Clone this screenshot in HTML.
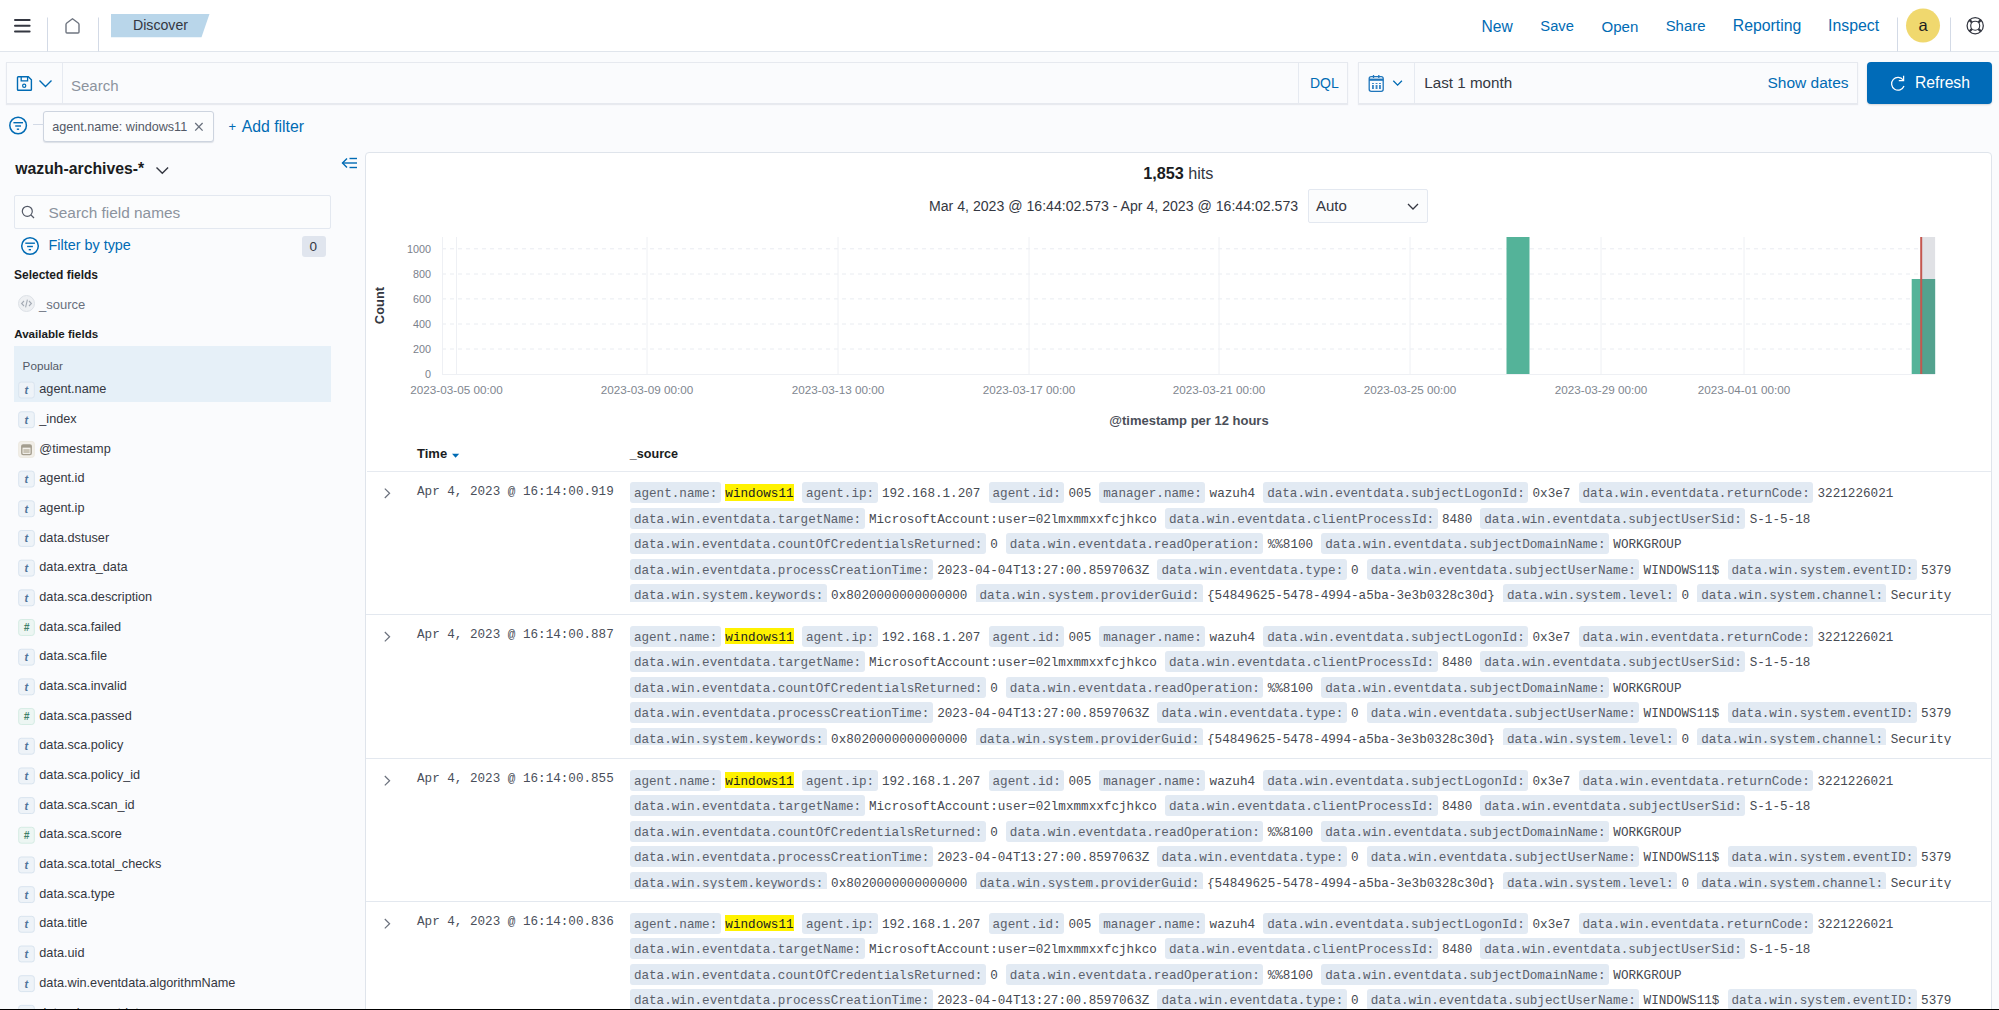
<!DOCTYPE html>
<html><head><meta charset="utf-8">
<style>
*{box-sizing:border-box;margin:0;padding:0}
html,body{width:1999px;height:1010px;overflow:hidden;background:#FAFBFD;font-family:"Liberation Sans",sans-serif;color:#343741}
.a{position:absolute;white-space:nowrap}
.t{position:absolute;white-space:nowrap;line-height:1}
svg{position:absolute;overflow:visible}
.ln{position:absolute;left:0;white-space:nowrap;height:21px;line-height:24.1px;font-family:"Liberation Mono",monospace;font-size:12.638px;color:#464A52}
.k{display:inline-block;vertical-align:top;background:#E2EAF3;color:#5A606B;padding:0 3.4px 0 3.9px;margin-right:4.4px;border-radius:3px;height:21px}
.v{display:inline-block;vertical-align:top;height:21px;margin-right:8.2px}
.hl{display:inline-block;vertical-align:top;margin-top:2.1px;height:16.5px;line-height:20.7px;background:#FFF200;color:#1a1c21;padding:0 0.35px}
</style></head><body>
<div class="a" style="left:0;top:0;width:1999px;height:52px;background:#fff;border-bottom:1px solid #E0E5EC"></div>
<svg style="left:0;top:0" width="1999" height="52">
  <g fill="#343741">
    <rect x="14" y="19.1" width="16.6" height="2" rx="1"/>
    <rect x="14" y="24.7" width="16.6" height="2" rx="1"/>
    <rect x="14" y="30.4" width="16.6" height="2" rx="1"/>
  </g>
  <rect x="47" y="17.5" width="1" height="34" fill="#D3DAE6"/>
  <rect x="98" y="17.5" width="1" height="34" fill="#D3DAE6"/>
  <path d="M66 24.6 Q66 23.6 66.8 23 L72.5 18.7 L78.2 23 Q79 23.6 79 24.6 L79 32 Q79 33 78 33 L67 33 Q66 33 66 32 Z" fill="none" stroke="#6F7580" stroke-width="1.4" stroke-linejoin="round"/>
  <polygon points="111,14 209.5,14 201.5,37.3 111,37.3" fill="#B9D6EA"/>
  <rect x="1897" y="17.5" width="1" height="34" fill="#D3DAE6"/>
  <rect x="1950" y="17.5" width="1" height="34" fill="#D3DAE6"/>
  <circle cx="1923" cy="25.5" r="17" fill="#F0D86E"/>
  <g transform="translate(1975.2,25.7)" fill="none" stroke="#343741">
    <circle r="8.1" stroke-width="1.25"/>
    <circle r="4.5" stroke-width="1.15"/>
    <g stroke-width="2.3"><line x1="3.2" y1="-3.2" x2="5.8" y2="-5.8"/><line x1="-3.2" y1="-3.2" x2="-5.8" y2="-5.8"/><line x1="3.2" y1="3.2" x2="5.8" y2="5.8"/><line x1="-3.2" y1="3.2" x2="-5.8" y2="5.8"/></g>
  </g>
</svg>
<div class="t" style="left:133.00px;top:18.02px;font-size:14.15px;color:#343741;">Discover</div>
<div class="t" style="left:1481.50px;top:18.59px;font-size:15.6px;color:#006BB4;">New</div>
<div class="t" style="left:1540.30px;top:19.31px;font-size:14.75px;color:#006BB4;">Save</div>
<div class="t" style="left:1601.50px;top:19.06px;font-size:15.05px;color:#006BB4;">Open</div>
<div class="t" style="left:1665.70px;top:19.19px;font-size:14.9px;color:#006BB4;">Share</div>
<div class="t" style="left:1732.80px;top:18.43px;font-size:15.8px;color:#006BB4;">Reporting</div>
<div class="t" style="left:1828.00px;top:18.38px;font-size:15.85px;color:#006BB4;">Inspect</div>
<div class="t" style="left:1903px;width:40px;text-align:center;top:17.43px;font-size:16.5px;color:#1a1c21">a</div>
<div class="a" style="left:6px;top:62px;width:1342px;height:41.5px;background:#FBFCFD;background:#FAFBFD;border:1px solid #E6E9EF;box-shadow:0 1px 1px rgba(152,162,179,.18)"></div>
<div class="a" style="left:62px;top:63px;width:1px;height:40px;background:#E6EAF1;"></div>
<div class="a" style="left:1298px;top:63px;width:1px;height:40px;background:#E6EAF1;"></div>
<div class="t" style="left:71.00px;top:77.90px;font-size:15px;color:#8C939E;">Search</div>
<div class="t" style="left:1310.00px;top:76.35px;font-size:14px;color:#006BB4;">DQL</div>
<div class="a" style="left:1358px;top:62px;width:500px;height:41.5px;background:#FBFCFD;background:#FAFBFD;border:1px solid #E6E9EF;box-shadow:0 1px 1px rgba(152,162,179,.18)"></div>
<div class="a" style="left:1414px;top:63px;width:1px;height:40px;background:#E6EAF1;"></div>
<div class="t" style="left:1424.30px;top:75.13px;font-size:15.2px;color:#343741;">Last 1 month</div>
<div class="t" style="left:1767.50px;top:74.88px;font-size:15.5px;color:#006BB4;">Show dates</div>
<div class="a" style="left:1867px;top:61.5px;width:125px;height:42px;background:#006BB8;border-radius:4px;box-shadow:0 1px 2px rgba(0,0,0,.15)"></div>
<div class="t" style="left:1915.00px;top:74.71px;font-size:15.7px;color:#fff;">Refresh</div>
<div class="a" style="left:43px;top:111.3px;width:170.8px;height:30.8px;background:#FBFCFD;border:1px solid #CDD4DF;border-radius:3px;box-shadow:0 1px 1px rgba(152,162,179,.3)"></div>
<div class="t" style="left:52.30px;top:120.83px;font-size:12.6px;color:#535966;">agent.name: windows11</div>
<div class="t" style="left:228.4px;top:118.83px;font-size:15.8px;color:#006BB4"><span style="font-size:13px;position:relative;top:-0.5px;margin-right:2.2px">+</span> Add filter</div>
<svg style="left:0;top:0" width="1999" height="150">
  <path d="M17.5 77.5 Q17.5 76.7 18.3 76.7 L28.3 76.7 L31.4 79.8 L31.4 89.5 Q31.4 90.3 30.6 90.3 L18.3 90.3 Q17.5 90.3 17.5 89.5 Z" fill="none" stroke="#006BB4" stroke-width="1.4"/>
  <path d="M21.2 76.7 L21.2 80.8 L27.6 80.8 L27.6 76.7" fill="none" stroke="#006BB4" stroke-width="1.3"/>
  <circle cx="24.2" cy="85.7" r="1.6" fill="none" stroke="#006BB4" stroke-width="1.2"/>
  <path d="M39.5 80.5 L45.5 86.5 L51.5 80.5" fill="none" stroke="#006BB4" stroke-width="1.4"/>
  <g fill="none" stroke="#1F76BC" stroke-width="1.3">
    <rect x="1369.2" y="76.6" width="14" height="14.7" rx="2"/>
    <line x1="1373.5" y1="75" x2="1373.5" y2="78"/>
    <line x1="1378.8" y1="75" x2="1378.8" y2="78"/>
  </g>
  <rect x="1369" y="78.6" width="14.4" height="2.2" fill="#1F76BC"/>
  <g fill="#3C88C6"><rect x="1372" y="83" width="1.9" height="1"/><rect x="1375.6" y="83" width="1.9" height="1"/><rect x="1379" y="83" width="1.9" height="1"/><rect x="1372" y="85" width="1.9" height="4"/><rect x="1375.6" y="85" width="1.9" height="4"/><rect x="1379" y="85" width="1.9" height="4"/></g>
  <path d="M1393.3 80.8 L1397.6 85.1 L1401.9 80.8" fill="none" stroke="#006BB4" stroke-width="1.3"/>
  <path d="M1903.2 80 A6.4 6.4 0 1 0 1904 86" fill="none" stroke="#fff" stroke-width="1.25"/>
  <path d="M1903.6 75.8 L1903.6 80.6 L1898.8 80.6" fill="none" stroke="#fff" stroke-width="1.25"/>
  <circle cx="18.1" cy="125.5" r="8.3" fill="none" stroke="#006BB4" stroke-width="1.5"/>
  <g stroke="#006BB4" stroke-width="1.4"><line x1="13.4" y1="122.7" x2="23" y2="122.7"/><line x1="15.2" y1="126" x2="21" y2="126"/><line x1="16.8" y1="129.2" x2="19.1" y2="129.2"/></g>
  <rect x="33" y="124" width="10.5" height="1" fill="#D3DAE6"/>
  <path d="M195.2 123 L202.6 130.6 M202.6 123 L195.2 130.6" stroke="#69707D" stroke-width="1.3"/>
</svg>
<div class="t" style="left:15.20px;top:161.13px;font-size:15.8px;color:#1a1c21;font-weight:bold;">wazuh-archives-*</div>
<div class="a" style="left:14.3px;top:195.4px;width:316.5px;height:33.2px;background:#FBFCFD;border:1px solid #E3E8F0;border-radius:2px"></div>
<svg style="left:0;top:0" width="366" height="1010">
  <path d="M156.5 167.5 L162.3 173.3 L168.1 167.5" fill="none" stroke="#343741" stroke-width="1.4"/>
  <g fill="none" stroke="#006BB4" stroke-width="1.4"><path d="M347 158.5 L342.5 163 L347 167.5"/><line x1="342.5" y1="163" x2="357" y2="163"/><line x1="349.5" y1="158.5" x2="357" y2="158.5"/><line x1="349.5" y1="167.5" x2="357" y2="167.5"/></g>
  <circle cx="27.3" cy="211.3" r="5" fill="none" stroke="#535966" stroke-width="1.2"/>
  <line x1="30.9" y1="214.9" x2="34" y2="218" stroke="#535966" stroke-width="1.3"/>
  <circle cx="30" cy="246" r="8.3" fill="none" stroke="#006BB4" stroke-width="1.5"/>
  <g stroke="#006BB4" stroke-width="1.4"><line x1="25.3" y1="243.2" x2="34.9" y2="243.2"/><line x1="27.1" y1="246.5" x2="32.9" y2="246.5"/><line x1="28.7" y1="249.7" x2="31" y2="249.7"/></g>
  <circle cx="26.5" cy="303.5" r="8" fill="#EEF0F3" stroke="#DDE1E7" stroke-width="1"/>
  <path d="M24 301 L21.6 303.5 L24 306 M29 301 L31.4 303.5 L29 306 M27.4 299.6 L25.6 307.4" fill="none" stroke="#A5ABB5" stroke-width="1.1"/>
</svg>
<div class="t" style="left:48.50px;top:205.16px;font-size:15.4px;color:#8C939E;">Search field names</div>
<div class="t" style="left:48.50px;top:237.81px;font-size:14.4px;color:#006BB4;">Filter by type</div>
<div class="a" style="left:301.6px;top:236px;width:24.4px;height:21.2px;background:#E0E5EE;border-radius:3px"></div>
<div class="t" style="left:309.50px;top:240.07px;font-size:13.5px;color:#343741;">0</div>
<div class="t" style="left:14.00px;top:268.84px;font-size:12px;color:#1a1c21;font-weight:bold;">Selected fields</div>
<div class="t" style="left:39.10px;top:298.30px;font-size:13px;color:#69707D;">_source</div>
<div class="t" style="left:14.20px;top:328.08px;font-size:11.6px;color:#1a1c21;font-weight:bold;">Available fields</div>
<div class="a" style="left:14.1px;top:345.5px;width:316.7px;height:56.5px;background:#E6F0F8;"></div>
<div class="t" style="left:22.60px;top:359.80px;font-size:11.7px;color:#535966;">Popular</div>
<div class="t" style="left:39.30px;top:383.25px;font-size:12.7px;color:#343741;">agent.name</div>
<div class="t" style="left:39.30px;top:412.93px;font-size:12.7px;color:#343741;">_index</div>
<div class="t" style="left:39.30px;top:442.61px;font-size:12.7px;color:#343741;">@timestamp</div>
<div class="t" style="left:39.30px;top:472.29px;font-size:12.7px;color:#343741;">agent.id</div>
<div class="t" style="left:39.30px;top:501.97px;font-size:12.7px;color:#343741;">agent.ip</div>
<div class="t" style="left:39.30px;top:531.65px;font-size:12.7px;color:#343741;">data.dstuser</div>
<div class="t" style="left:39.30px;top:561.33px;font-size:12.7px;color:#343741;">data.extra_data</div>
<div class="t" style="left:39.30px;top:591.01px;font-size:12.7px;color:#343741;">data.sca.description</div>
<div class="t" style="left:39.30px;top:620.69px;font-size:12.7px;color:#343741;">data.sca.failed</div>
<div class="t" style="left:39.30px;top:650.37px;font-size:12.7px;color:#343741;">data.sca.file</div>
<div class="t" style="left:39.30px;top:680.05px;font-size:12.7px;color:#343741;">data.sca.invalid</div>
<div class="t" style="left:39.30px;top:709.73px;font-size:12.7px;color:#343741;">data.sca.passed</div>
<div class="t" style="left:39.30px;top:739.41px;font-size:12.7px;color:#343741;">data.sca.policy</div>
<div class="t" style="left:39.30px;top:769.09px;font-size:12.7px;color:#343741;">data.sca.policy_id</div>
<div class="t" style="left:39.30px;top:798.77px;font-size:12.7px;color:#343741;">data.sca.scan_id</div>
<div class="t" style="left:39.30px;top:828.45px;font-size:12.7px;color:#343741;">data.sca.score</div>
<div class="t" style="left:39.30px;top:858.13px;font-size:12.7px;color:#343741;">data.sca.total_checks</div>
<div class="t" style="left:39.30px;top:887.81px;font-size:12.7px;color:#343741;">data.sca.type</div>
<div class="t" style="left:39.30px;top:917.49px;font-size:12.7px;color:#343741;">data.title</div>
<div class="t" style="left:39.30px;top:947.17px;font-size:12.7px;color:#343741;">data.uid</div>
<div class="t" style="left:39.30px;top:976.85px;font-size:12.7px;color:#343741;">data.win.eventdata.algorithmName</div>
<div class="t" style="left:39.30px;top:1006.53px;font-size:12.7px;color:#343741;">data.win.eventdata.a</div>
<svg style="left:0;top:0" width="366" height="1010">
<rect x="18.7" y="382.10" width="15.6" height="15.9" rx="2.5" fill="#EEF3F8" stroke="#D9E4EF" stroke-width="1"/>
<text x="26.3" y="394.00" font-family="Liberation Sans" font-style="italic" font-weight="bold" font-size="11" fill="#50739A" text-anchor="middle">t</text>
<rect x="18.7" y="411.78" width="15.6" height="15.9" rx="2.5" fill="#EEF3F8" stroke="#D9E4EF" stroke-width="1"/>
<text x="26.3" y="423.68" font-family="Liberation Sans" font-style="italic" font-weight="bold" font-size="11" fill="#50739A" text-anchor="middle">t</text>
<rect x="18.7" y="441.46" width="15.6" height="15.9" rx="2.5" fill="#F2EFE9" stroke="#ECE8DF" stroke-width="1"/>
<rect x="21.8" y="445.06" width="9.4" height="9.6" rx="1.3" fill="none" stroke="#A39D8E" stroke-width="1.4"/>
<rect x="21.8" y="445.06" width="9.4" height="2.6" fill="#A39D8E"/>
<rect x="23.4" y="449.06" width="6.2" height="4" fill="#C9C3B5"/>
<rect x="18.7" y="471.14" width="15.6" height="15.9" rx="2.5" fill="#EEF3F8" stroke="#D9E4EF" stroke-width="1"/>
<text x="26.3" y="483.04" font-family="Liberation Sans" font-style="italic" font-weight="bold" font-size="11" fill="#50739A" text-anchor="middle">t</text>
<rect x="18.7" y="500.82" width="15.6" height="15.9" rx="2.5" fill="#EEF3F8" stroke="#D9E4EF" stroke-width="1"/>
<text x="26.3" y="512.72" font-family="Liberation Sans" font-style="italic" font-weight="bold" font-size="11" fill="#50739A" text-anchor="middle">t</text>
<rect x="18.7" y="530.50" width="15.6" height="15.9" rx="2.5" fill="#EEF3F8" stroke="#D9E4EF" stroke-width="1"/>
<text x="26.3" y="542.40" font-family="Liberation Sans" font-style="italic" font-weight="bold" font-size="11" fill="#50739A" text-anchor="middle">t</text>
<rect x="18.7" y="560.18" width="15.6" height="15.9" rx="2.5" fill="#EEF3F8" stroke="#D9E4EF" stroke-width="1"/>
<text x="26.3" y="572.08" font-family="Liberation Sans" font-style="italic" font-weight="bold" font-size="11" fill="#50739A" text-anchor="middle">t</text>
<rect x="18.7" y="589.86" width="15.6" height="15.9" rx="2.5" fill="#EEF3F8" stroke="#D9E4EF" stroke-width="1"/>
<text x="26.3" y="601.76" font-family="Liberation Sans" font-style="italic" font-weight="bold" font-size="11" fill="#50739A" text-anchor="middle">t</text>
<rect x="18.7" y="619.54" width="15.6" height="15.9" rx="2.5" fill="#EDF6F3" stroke="#D5ECE4" stroke-width="1"/>
<text x="26.5" y="631.44" font-family="Liberation Sans" font-style="italic" font-weight="bold" font-size="10" fill="#3F7F69" text-anchor="middle">#</text>
<rect x="18.7" y="649.22" width="15.6" height="15.9" rx="2.5" fill="#EEF3F8" stroke="#D9E4EF" stroke-width="1"/>
<text x="26.3" y="661.12" font-family="Liberation Sans" font-style="italic" font-weight="bold" font-size="11" fill="#50739A" text-anchor="middle">t</text>
<rect x="18.7" y="678.90" width="15.6" height="15.9" rx="2.5" fill="#EEF3F8" stroke="#D9E4EF" stroke-width="1"/>
<text x="26.3" y="690.80" font-family="Liberation Sans" font-style="italic" font-weight="bold" font-size="11" fill="#50739A" text-anchor="middle">t</text>
<rect x="18.7" y="708.58" width="15.6" height="15.9" rx="2.5" fill="#EDF6F3" stroke="#D5ECE4" stroke-width="1"/>
<text x="26.5" y="720.48" font-family="Liberation Sans" font-style="italic" font-weight="bold" font-size="10" fill="#3F7F69" text-anchor="middle">#</text>
<rect x="18.7" y="738.26" width="15.6" height="15.9" rx="2.5" fill="#EEF3F8" stroke="#D9E4EF" stroke-width="1"/>
<text x="26.3" y="750.16" font-family="Liberation Sans" font-style="italic" font-weight="bold" font-size="11" fill="#50739A" text-anchor="middle">t</text>
<rect x="18.7" y="767.94" width="15.6" height="15.9" rx="2.5" fill="#EEF3F8" stroke="#D9E4EF" stroke-width="1"/>
<text x="26.3" y="779.84" font-family="Liberation Sans" font-style="italic" font-weight="bold" font-size="11" fill="#50739A" text-anchor="middle">t</text>
<rect x="18.7" y="797.62" width="15.6" height="15.9" rx="2.5" fill="#EEF3F8" stroke="#D9E4EF" stroke-width="1"/>
<text x="26.3" y="809.52" font-family="Liberation Sans" font-style="italic" font-weight="bold" font-size="11" fill="#50739A" text-anchor="middle">t</text>
<rect x="18.7" y="827.30" width="15.6" height="15.9" rx="2.5" fill="#EDF6F3" stroke="#D5ECE4" stroke-width="1"/>
<text x="26.5" y="839.20" font-family="Liberation Sans" font-style="italic" font-weight="bold" font-size="10" fill="#3F7F69" text-anchor="middle">#</text>
<rect x="18.7" y="856.98" width="15.6" height="15.9" rx="2.5" fill="#EEF3F8" stroke="#D9E4EF" stroke-width="1"/>
<text x="26.3" y="868.88" font-family="Liberation Sans" font-style="italic" font-weight="bold" font-size="11" fill="#50739A" text-anchor="middle">t</text>
<rect x="18.7" y="886.66" width="15.6" height="15.9" rx="2.5" fill="#EEF3F8" stroke="#D9E4EF" stroke-width="1"/>
<text x="26.3" y="898.56" font-family="Liberation Sans" font-style="italic" font-weight="bold" font-size="11" fill="#50739A" text-anchor="middle">t</text>
<rect x="18.7" y="916.34" width="15.6" height="15.9" rx="2.5" fill="#EEF3F8" stroke="#D9E4EF" stroke-width="1"/>
<text x="26.3" y="928.24" font-family="Liberation Sans" font-style="italic" font-weight="bold" font-size="11" fill="#50739A" text-anchor="middle">t</text>
<rect x="18.7" y="946.02" width="15.6" height="15.9" rx="2.5" fill="#EEF3F8" stroke="#D9E4EF" stroke-width="1"/>
<text x="26.3" y="957.92" font-family="Liberation Sans" font-style="italic" font-weight="bold" font-size="11" fill="#50739A" text-anchor="middle">t</text>
<rect x="18.7" y="975.70" width="15.6" height="15.9" rx="2.5" fill="#EEF3F8" stroke="#D9E4EF" stroke-width="1"/>
<text x="26.3" y="987.60" font-family="Liberation Sans" font-style="italic" font-weight="bold" font-size="11" fill="#50739A" text-anchor="middle">t</text>
<rect x="18.7" y="1005.38" width="15.6" height="15.9" rx="2.5" fill="#EEF3F8" stroke="#D9E4EF" stroke-width="1"/>
<text x="26.3" y="1017.28" font-family="Liberation Sans" font-style="italic" font-weight="bold" font-size="11" fill="#50739A" text-anchor="middle">t</text>
</svg>
<div class="a" style="left:365px;top:152px;width:1627px;height:900px;background:#fff;border:1px solid #DFE4EB;border-radius:4px"></div>
<div class="t" style="left:1143.2px;top:165.29px;font-size:16.2px;color:#343741"><b style="color:#1a1c21">1,853</b> hits</div>
<div class="t" style="left:929.00px;top:199.05px;font-size:14.12px;color:#343741;">Mar 4, 2023 @ 16:44:02.573 - Apr 4, 2023 @ 16:44:02.573</div>
<div class="a" style="left:1307.6px;top:189.3px;width:120.2px;height:33.9px;background:#FBFCFD;border:1px solid #E3E8F0;border-radius:2px"></div>
<div class="t" style="left:1316.00px;top:198.10px;font-size:15px;color:#343741;">Auto</div>
<svg style="left:0;top:0" width="1999" height="1010">
<line x1="442" y1="248.8" x2="1935" y2="248.8" stroke="#E9ECF1" stroke-width="1" stroke-dasharray="4 4"/>
<line x1="442" y1="274" x2="1935" y2="274" stroke="#E9ECF1" stroke-width="1" stroke-dasharray="4 4"/>
<line x1="442" y1="298.9" x2="1935" y2="298.9" stroke="#E9ECF1" stroke-width="1" stroke-dasharray="4 4"/>
<line x1="442" y1="324" x2="1935" y2="324" stroke="#E9ECF1" stroke-width="1" stroke-dasharray="4 4"/>
<line x1="442" y1="349" x2="1935" y2="349" stroke="#E9ECF1" stroke-width="1" stroke-dasharray="4 4"/>
<line x1="456.5" y1="237" x2="456.5" y2="374" stroke="#EEF0F4" stroke-width="1"/>
<line x1="647" y1="237" x2="647" y2="374" stroke="#EEF0F4" stroke-width="1"/>
<line x1="838" y1="237" x2="838" y2="374" stroke="#EEF0F4" stroke-width="1"/>
<line x1="1029" y1="237" x2="1029" y2="374" stroke="#EEF0F4" stroke-width="1"/>
<line x1="1219" y1="237" x2="1219" y2="374" stroke="#EEF0F4" stroke-width="1"/>
<line x1="1410" y1="237" x2="1410" y2="374" stroke="#EEF0F4" stroke-width="1"/>
<line x1="1601" y1="237" x2="1601" y2="374" stroke="#EEF0F4" stroke-width="1"/>
<line x1="1744" y1="237" x2="1744" y2="374" stroke="#EEF0F4" stroke-width="1"/>
<line x1="442.5" y1="237" x2="442.5" y2="374.5" stroke="#EEF0F4" stroke-width="1"/>
<line x1="442" y1="374.5" x2="1935" y2="374.5" stroke="#EEF0F4" stroke-width="1"/>
<rect x="1506.5" y="237" width="23" height="137" fill="#54B399"/>
<rect x="1921.5" y="237" width="13.6" height="42" fill="#E0E1E5"/>
<rect x="1911.7" y="279" width="23.4" height="95" fill="#54B399"/>
<rect x="1921.5" y="279" width="13.6" height="95" fill="#53A28E"/>
<rect x="1920.2" y="237" width="2" height="137" fill="#C4574F"/>
<path d="M1408 204 L1413 209 L1418 204" fill="none" stroke="#343741" stroke-width="1.3"/>
<path d="M452 453.8 L459.2 453.8 L455.6 457.8 Z" fill="#006BB4"/>
</svg>
<div class="t" style="left:331px;width:100px;text-align:right;top:243.66px;font-size:10.8px;color:#7A808B">1000</div>
<div class="t" style="left:331px;width:100px;text-align:right;top:268.86px;font-size:10.8px;color:#7A808B">800</div>
<div class="t" style="left:331px;width:100px;text-align:right;top:293.76px;font-size:10.8px;color:#7A808B">600</div>
<div class="t" style="left:331px;width:100px;text-align:right;top:318.86px;font-size:10.8px;color:#7A808B">400</div>
<div class="t" style="left:331px;width:100px;text-align:right;top:343.86px;font-size:10.8px;color:#7A808B">200</div>
<div class="t" style="left:331px;width:100px;text-align:right;top:368.86px;font-size:10.8px;color:#7A808B">0</div>
<div class="t" style="left:396.5px;width:120px;text-align:center;top:383.80px;font-size:11.7px;color:#80868F">2023-03-05 00:00</div>
<div class="t" style="left:587px;width:120px;text-align:center;top:383.80px;font-size:11.7px;color:#80868F">2023-03-09 00:00</div>
<div class="t" style="left:778px;width:120px;text-align:center;top:383.80px;font-size:11.7px;color:#80868F">2023-03-13 00:00</div>
<div class="t" style="left:969px;width:120px;text-align:center;top:383.80px;font-size:11.7px;color:#80868F">2023-03-17 00:00</div>
<div class="t" style="left:1159px;width:120px;text-align:center;top:383.80px;font-size:11.7px;color:#80868F">2023-03-21 00:00</div>
<div class="t" style="left:1350px;width:120px;text-align:center;top:383.80px;font-size:11.7px;color:#80868F">2023-03-25 00:00</div>
<div class="t" style="left:1541px;width:120px;text-align:center;top:383.80px;font-size:11.7px;color:#80868F">2023-03-29 00:00</div>
<div class="t" style="left:1684px;width:120px;text-align:center;top:383.80px;font-size:11.7px;color:#80868F">2023-04-01 00:00</div>
<div class="t" style="left:1089px;width:200px;text-align:center;top:413.60px;font-size:13px;font-weight:bold;color:#4A4E58">@timestamp per 12 hours</div>
<div class="t" style="left:349.1px;width:60px;text-align:center;top:298.9px;font-size:12.9px;line-height:13px;font-weight:bold;color:#343741;transform:rotate(-90deg)">Count</div>
<div class="t" style="left:417.00px;top:446.90px;font-size:13px;color:#1a1c21;font-weight:bold;">Time</div>
<div class="t" style="left:629.80px;top:448.03px;font-size:12.6px;color:#1a1c21;font-weight:bold;">_source</div>
<div class="a" style="left:367px;top:470.5px;width:1624px;height:1px;background:#E6EAF0;"></div>
<div class="t" style="left:417.00px;top:485.53px;font-size:12.62px;color:#4A4F5A;font-family:'Liberation Mono',monospace;">Apr 4, 2023 @ 16:14:00.919</div>
<div class="a" style="left:630px;top:482.20px;width:1350px;height:119.8px;overflow:hidden">
<div class="ln" style="top:0.00px"><span class="k">agent.name:</span><span class="v"><span class="hl">windows11</span></span><span class="k">agent.ip:</span><span class="v">192.168.1.207</span><span class="k">agent.id:</span><span class="v">005</span><span class="k">manager.name:</span><span class="v">wazuh4</span><span class="k">data.win.eventdata.subjectLogonId:</span><span class="v">0x3e7</span><span class="k">data.win.eventdata.returnCode:</span><span class="v">3221226021</span></div>
<div class="ln" style="top:25.50px"><span class="k">data.win.eventdata.targetName:</span><span class="v">MicrosoftAccount:user=02lmxmmxxfcjhkco</span><span class="k">data.win.eventdata.clientProcessId:</span><span class="v">8480</span><span class="k">data.win.eventdata.subjectUserSid:</span><span class="v">S-1-5-18</span></div>
<div class="ln" style="top:51.00px"><span class="k">data.win.eventdata.countOfCredentialsReturned:</span><span class="v">0</span><span class="k">data.win.eventdata.readOperation:</span><span class="v">%%8100</span><span class="k">data.win.eventdata.subjectDomainName:</span><span class="v">WORKGROUP</span></div>
<div class="ln" style="top:76.50px"><span class="k">data.win.eventdata.processCreationTime:</span><span class="v">2023-04-04T13:27:00.8597063Z</span><span class="k">data.win.eventdata.type:</span><span class="v">0</span><span class="k">data.win.eventdata.subjectUserName:</span><span class="v">WINDOWS11$</span><span class="k">data.win.system.eventID:</span><span class="v">5379</span></div>
<div class="ln" style="top:102.00px"><span class="k">data.win.system.keywords:</span><span class="v">0x8020000000000000</span><span class="k">data.win.system.providerGuid:</span><span class="v">{54849625-5478-4994-a5ba-3e3b0328c30d}</span><span class="k">data.win.system.level:</span><span class="v">0</span><span class="k">data.win.system.channel:</span><span class="v">Security</span></div>
</div>
<div class="a" style="left:366px;top:614.0px;width:1626px;height:1px;background:#E3E8EF;"></div>
<div class="t" style="left:417.00px;top:628.93px;font-size:12.62px;color:#4A4F5A;font-family:'Liberation Mono',monospace;">Apr 4, 2023 @ 16:14:00.887</div>
<div class="a" style="left:630px;top:625.60px;width:1350px;height:119.8px;overflow:hidden">
<div class="ln" style="top:0.00px"><span class="k">agent.name:</span><span class="v"><span class="hl">windows11</span></span><span class="k">agent.ip:</span><span class="v">192.168.1.207</span><span class="k">agent.id:</span><span class="v">005</span><span class="k">manager.name:</span><span class="v">wazuh4</span><span class="k">data.win.eventdata.subjectLogonId:</span><span class="v">0x3e7</span><span class="k">data.win.eventdata.returnCode:</span><span class="v">3221226021</span></div>
<div class="ln" style="top:25.50px"><span class="k">data.win.eventdata.targetName:</span><span class="v">MicrosoftAccount:user=02lmxmmxxfcjhkco</span><span class="k">data.win.eventdata.clientProcessId:</span><span class="v">8480</span><span class="k">data.win.eventdata.subjectUserSid:</span><span class="v">S-1-5-18</span></div>
<div class="ln" style="top:51.00px"><span class="k">data.win.eventdata.countOfCredentialsReturned:</span><span class="v">0</span><span class="k">data.win.eventdata.readOperation:</span><span class="v">%%8100</span><span class="k">data.win.eventdata.subjectDomainName:</span><span class="v">WORKGROUP</span></div>
<div class="ln" style="top:76.50px"><span class="k">data.win.eventdata.processCreationTime:</span><span class="v">2023-04-04T13:27:00.8597063Z</span><span class="k">data.win.eventdata.type:</span><span class="v">0</span><span class="k">data.win.eventdata.subjectUserName:</span><span class="v">WINDOWS11$</span><span class="k">data.win.system.eventID:</span><span class="v">5379</span></div>
<div class="ln" style="top:102.00px"><span class="k">data.win.system.keywords:</span><span class="v">0x8020000000000000</span><span class="k">data.win.system.providerGuid:</span><span class="v">{54849625-5478-4994-a5ba-3e3b0328c30d}</span><span class="k">data.win.system.level:</span><span class="v">0</span><span class="k">data.win.system.channel:</span><span class="v">Security</span></div>
</div>
<div class="a" style="left:366px;top:758.1px;width:1626px;height:1px;background:#E3E8EF;"></div>
<div class="t" style="left:417.00px;top:772.93px;font-size:12.62px;color:#4A4F5A;font-family:'Liberation Mono',monospace;">Apr 4, 2023 @ 16:14:00.855</div>
<div class="a" style="left:630px;top:769.60px;width:1350px;height:119.8px;overflow:hidden">
<div class="ln" style="top:0.00px"><span class="k">agent.name:</span><span class="v"><span class="hl">windows11</span></span><span class="k">agent.ip:</span><span class="v">192.168.1.207</span><span class="k">agent.id:</span><span class="v">005</span><span class="k">manager.name:</span><span class="v">wazuh4</span><span class="k">data.win.eventdata.subjectLogonId:</span><span class="v">0x3e7</span><span class="k">data.win.eventdata.returnCode:</span><span class="v">3221226021</span></div>
<div class="ln" style="top:25.50px"><span class="k">data.win.eventdata.targetName:</span><span class="v">MicrosoftAccount:user=02lmxmmxxfcjhkco</span><span class="k">data.win.eventdata.clientProcessId:</span><span class="v">8480</span><span class="k">data.win.eventdata.subjectUserSid:</span><span class="v">S-1-5-18</span></div>
<div class="ln" style="top:51.00px"><span class="k">data.win.eventdata.countOfCredentialsReturned:</span><span class="v">0</span><span class="k">data.win.eventdata.readOperation:</span><span class="v">%%8100</span><span class="k">data.win.eventdata.subjectDomainName:</span><span class="v">WORKGROUP</span></div>
<div class="ln" style="top:76.50px"><span class="k">data.win.eventdata.processCreationTime:</span><span class="v">2023-04-04T13:27:00.8597063Z</span><span class="k">data.win.eventdata.type:</span><span class="v">0</span><span class="k">data.win.eventdata.subjectUserName:</span><span class="v">WINDOWS11$</span><span class="k">data.win.system.eventID:</span><span class="v">5379</span></div>
<div class="ln" style="top:102.00px"><span class="k">data.win.system.keywords:</span><span class="v">0x8020000000000000</span><span class="k">data.win.system.providerGuid:</span><span class="v">{54849625-5478-4994-a5ba-3e3b0328c30d}</span><span class="k">data.win.system.level:</span><span class="v">0</span><span class="k">data.win.system.channel:</span><span class="v">Security</span></div>
</div>
<div class="a" style="left:366px;top:901.0px;width:1626px;height:1px;background:#E3E8EF;"></div>
<div class="t" style="left:417.00px;top:915.93px;font-size:12.62px;color:#4A4F5A;font-family:'Liberation Mono',monospace;">Apr 4, 2023 @ 16:14:00.836</div>
<div class="a" style="left:630px;top:912.60px;width:1350px;height:119.8px;overflow:hidden">
<div class="ln" style="top:0.00px"><span class="k">agent.name:</span><span class="v"><span class="hl">windows11</span></span><span class="k">agent.ip:</span><span class="v">192.168.1.207</span><span class="k">agent.id:</span><span class="v">005</span><span class="k">manager.name:</span><span class="v">wazuh4</span><span class="k">data.win.eventdata.subjectLogonId:</span><span class="v">0x3e7</span><span class="k">data.win.eventdata.returnCode:</span><span class="v">3221226021</span></div>
<div class="ln" style="top:25.50px"><span class="k">data.win.eventdata.targetName:</span><span class="v">MicrosoftAccount:user=02lmxmmxxfcjhkco</span><span class="k">data.win.eventdata.clientProcessId:</span><span class="v">8480</span><span class="k">data.win.eventdata.subjectUserSid:</span><span class="v">S-1-5-18</span></div>
<div class="ln" style="top:51.00px"><span class="k">data.win.eventdata.countOfCredentialsReturned:</span><span class="v">0</span><span class="k">data.win.eventdata.readOperation:</span><span class="v">%%8100</span><span class="k">data.win.eventdata.subjectDomainName:</span><span class="v">WORKGROUP</span></div>
<div class="ln" style="top:76.50px"><span class="k">data.win.eventdata.processCreationTime:</span><span class="v">2023-04-04T13:27:00.8597063Z</span><span class="k">data.win.eventdata.type:</span><span class="v">0</span><span class="k">data.win.eventdata.subjectUserName:</span><span class="v">WINDOWS11$</span><span class="k">data.win.system.eventID:</span><span class="v">5379</span></div>
<div class="ln" style="top:102.00px"><span class="k">data.win.system.keywords:</span><span class="v">0x8020000000000000</span><span class="k">data.win.system.providerGuid:</span><span class="v">{54849625-5478-4994-a5ba-3e3b0328c30d}</span><span class="k">data.win.system.level:</span><span class="v">0</span><span class="k">data.win.system.channel:</span><span class="v">Security</span></div>
</div>
<svg style="left:0;top:0" width="400" height="1010">
<path d="M384.8 488.60 L389.6 493.30 L384.8 498.00" fill="none" stroke="#6A707C" stroke-width="1.2"/>
<path d="M384.8 632.00 L389.6 636.70 L384.8 641.40" fill="none" stroke="#6A707C" stroke-width="1.2"/>
<path d="M384.8 776.00 L389.6 780.70 L384.8 785.40" fill="none" stroke="#6A707C" stroke-width="1.2"/>
<path d="M384.8 919.00 L389.6 923.70 L384.8 928.40" fill="none" stroke="#6A707C" stroke-width="1.2"/>
</svg>
<div class="a" style="left:0;top:1009px;width:1999px;height:1px;background:#000"></div>
</body></html>
